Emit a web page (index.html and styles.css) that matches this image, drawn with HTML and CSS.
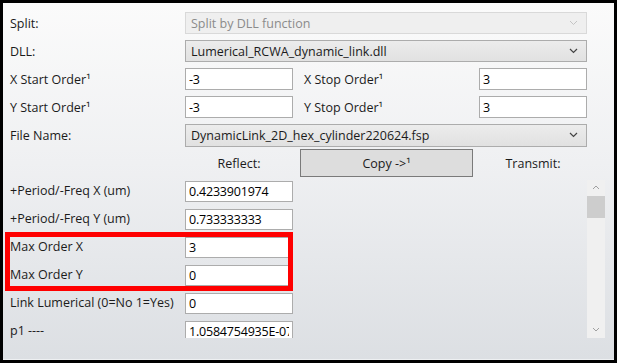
FILE: index.html
```html
<!DOCTYPE html>
<html lang="en">
<head>
  <meta charset="UTF-8" />
  <title>DLL Split Settings</title>
  <link rel="stylesheet" href="styles.css">
</head>
<body>

<div class="panel">
  <div class="form">
    <span class="lbl">Split:</span>
    <div class="combo combo-disabled span3">
      <span>Split by DLL function</span>
      <svg class="chev" width="9" height="6" viewBox="0 0 9 6"><path d="M1 1 L4.5 4.5 L8 1" fill="none" stroke="#c4c4c4" stroke-width="1"/></svg>
    </div>

    <span class="lbl">DLL:</span>
    <div class="combo span3">
      <span>Lumerical_RCWA_dynamic_link.dll</span>
      <svg class="chev" width="9" height="6" viewBox="0 0 9 6"><path d="M1 1 L4.5 4.5 L8 1" fill="none" stroke="#444" stroke-width="1.2"/></svg>
    </div>

    <span class="lbl">X Start Order¹</span>
    <input class="field" value="-3">
    <span class="lbl lbl-right">X Stop Order¹</span>
    <input class="field" value="3">

    <span class="lbl">Y Start Order¹</span>
    <input class="field" value="-3">
    <span class="lbl lbl-right">Y Stop Order¹</span>
    <input class="field" value="3">

    <span class="lbl">File Name:</span>
    <div class="combo combo-tall span3">
      <span>DynamicLink_2D_hex_cylinder220624.fsp</span>
      <svg class="chev" width="9" height="6" viewBox="0 0 9 6"><path d="M1 1 L4.5 4.5 L8 1" fill="none" stroke="#444" stroke-width="1.2"/></svg>
    </div>

    <span></span>
    <span class="center">Reflect:</span>
    <button class="copy">Copy -&gt;¹</button>
    <span class="center">Transmit:</span>
  </div>

  <div class="scroller">
    <div class="scroll-content">
      <span class="lbl">+Period/-Freq X (um)</span>
      <input class="field small" value="0.4233901974">

      <span class="lbl">+Period/-Freq Y (um)</span>
      <input class="field small" value="0.733333333">

      <span class="lbl">Max Order X</span>
      <input class="field small" value="3">

      <span class="lbl">Max Order Y</span>
      <input class="field small" value="0">

      <span class="lbl">Link Lumerical (0=No 1=Yes)</span>
      <input class="field small" value="0">

      <span class="lbl">p1 ----</span>
      <input class="field small" value="1.0584754935E-07">

      <div class="highlight"></div>
    </div>

    <div class="scrollbar">
      <svg class="arrow" width="18" height="16" viewBox="0 0 18 16"><path d="M6 9 L9 6 L12 9" fill="none" stroke="#a0a0a0" stroke-width="1"/></svg>
      <div class="thumb"></div>
      <div class="track"></div>
      <svg class="arrow" width="18" height="16" viewBox="0 0 18 16"><path d="M6 6 L9 9 L12 6" fill="none" stroke="#a0a0a0" stroke-width="1"/></svg>
    </div>
  </div>
</div>

</body>
</html>
```

FILE: styles.css
```css
html, body {
  margin: 0;
  padding: 0;
  background: #000;
}

body {
  padding: 3px;
  width: 617px;
  height: 363px;
  box-sizing: border-box;
  font-family: "Open Sans", "Noto Sans", sans-serif;
  font-size: 12.5px;
  color: #1b1b1b;
}

.panel {
  width: 611px;
  height: 357px;
  box-sizing: border-box;
  padding-top: 6px;
  background: linear-gradient(to bottom, #fbfbfb 0%, #eff0f2 45%, #dcdfe3 100%);
  border-bottom: 1px solid #eef0f2;
  overflow: hidden;
}

.form {
  display: grid;
  grid-template-columns: 175px 108px 186px 108px;
  grid-auto-rows: 28px;
  align-items: center;
  padding-left: 7px;
}

.lbl {
  white-space: nowrap;
}

.lbl-right {
  padding-left: 11px;
}

.center {
  text-align: center;
}

.span3 {
  grid-column: span 3;
}

.field {
  height: 22px;
  box-sizing: border-box;
  border: 1px solid #acacac;
  background: #fff;
  padding: 0 3px;
  margin: 0;
  font: inherit;
  letter-spacing: -0.2px;
  color: #000;
  width: 108px;
}

.field.small {
  height: 21px;
  margin-top: 1px;
}

.combo {
  height: 22px;
  box-sizing: border-box;
  border: 1px solid #acacac;
  background: linear-gradient(to bottom, #ececec, #e1e1e1);
  display: flex;
  align-items: center;
  justify-content: space-between;
  padding: 0 8px 0 5px;
}

.combo-tall {
  height: 23px;
}

.combo-disabled {
  background: #efefef;
  border-color: #d9d9d9;
  color: #8b8b8b;
}

.copy {
  height: 28px;
  margin: 0 6px 0 7px;
  border: 1px solid #7a7a7a;
  background: #dddddd;
  font: inherit;
  color: #1b1b1b;
  padding: 0;
}

.scroller {
  display: flex;
  width: 602px;
  height: 158px;
  margin-top: 3px;
  overflow: hidden;
}

.scroll-content {
  position: relative;
  flex: 1;
  display: grid;
  grid-template-columns: 175px 108px;
  grid-auto-rows: 28px;
  align-items: start;
  align-content: start;
  padding-left: 7px;
}

.scroll-content .lbl {
  line-height: 21px;
}

.highlight {
  position: absolute;
  left: 2px;
  top: 52px;
  width: 288px;
  height: 59px;
  box-sizing: border-box;
  border: 5px solid #ff0000;
  pointer-events: none;
}

.scrollbar {
  width: 18px;
  display: flex;
  flex-direction: column;
  background: #f0f0f0;
}

.arrow {
  display: block;
  flex: none;
}

.thumb {
  height: 22px;
  background: #cdcdcd;
}

.track {
  flex: 1;
}
```
